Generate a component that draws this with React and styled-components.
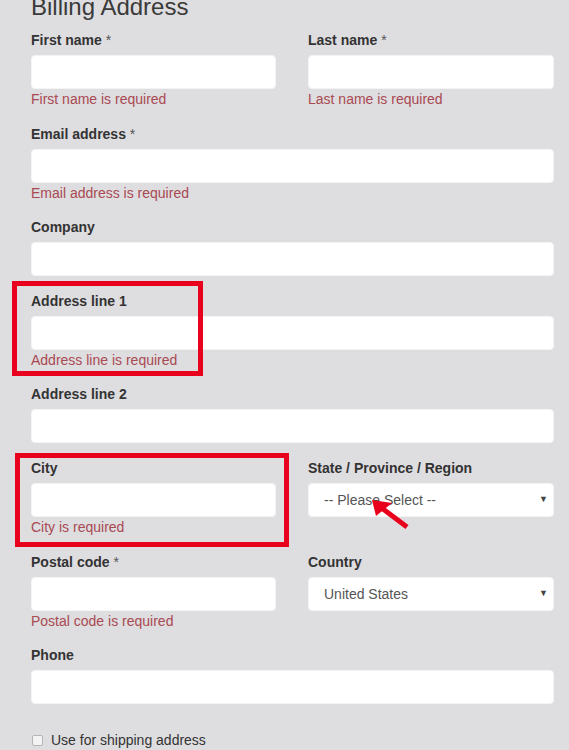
import React from 'react';
import styled, { createGlobalStyle } from 'styled-components';

const GlobalStyle = createGlobalStyle`
  html, body {
    margin: 0;
    padding: 0;
    background: #dedde0;
    overflow: hidden;
  }
  body {
    font-family: "Liberation Sans", Arial, Helvetica, sans-serif;
    font-size: 14px;
    color: #333;
  }
`;

const Page = styled.div`
  position: relative;
  width: 569px;
  height: 750px;
  overflow: hidden;
  box-sizing: border-box;
  padding: 0 15px 0 31px;
`;

const Title = styled.h3`
  margin: -6px 0 10px;
  font-size: 24px;
  font-weight: 400;
  line-height: 26px;
  color: #3a3a3a;
`;

const Row = styled.div`
  display: grid;
  grid-template-columns: 245px 246px;
  column-gap: 32px;
`;

const Group = styled.div`
  margin-bottom: 14.6px;
`;

const Label = styled.label`
  display: block;
  font-weight: 700;
  line-height: 20px;
  margin-bottom: 5px;
  color: #333;
`;

const Star = styled.span`
  font-weight: 400;
  color: #555;
`;

const Input = styled.input`
  display: block;
  box-sizing: border-box;
  width: 100%;
  height: 34px;
  margin: 0;
  padding: 6px 12px;
  border: 1px solid #f4f4f4;
  border-radius: 4px;
  background: #fff;
  font: inherit;
  outline: none;
`;

const SelectBox = styled.div`
  position: relative;
  height: 34px;
`;

const Select = styled.select`
  display: block;
  box-sizing: border-box;
  width: 100%;
  height: 34px;
  margin: 0;
  padding: 0 28px 0 15px;
  border: 1px solid #f4f4f4;
  border-radius: 4px;
  background: #fff;
  color: #555;
  font: inherit;
  appearance: none;
  outline: none;
`;

const Caret = styled.span`
  position: absolute;
  right: 6px;
  top: 11px;
  font-size: 9px;
  line-height: 10px;
  color: #444;
  pointer-events: none;
`;

const Error = styled.div`
  line-height: 20px;
  color: #a94a52;
`;

const CheckRow = styled.label`
  display: flex;
  align-items: center;
  gap: 8px;
  margin-top: 26px;
  line-height: 20px;
  color: #333;
  padding-left: 1px;
`;

const Box = styled.span`
  display: inline-block;
  width: 9px;
  height: 9px;
  border: 1px solid #b5b5b5;
  border-radius: 2px;
  background: #f3f3f3;
`;

const Highlight = styled.div`
  position: absolute;
  box-sizing: border-box;
  border: 5px solid #e8001c;
  left: ${p => p.x}px;
  top: ${p => p.y}px;
  width: ${p => p.w}px;
  height: ${p => p.h}px;
  pointer-events: none;
`;

const Arrow = styled.svg`
  position: absolute;
  left: 0;
  top: 0;
  pointer-events: none;
`;

const Field = ({ label, required, error, select, value }) => (
  <Group>
    <Label>
      {label}
      {required && <Star> *</Star>}
    </Label>
    {select ? (
      <SelectBox>
        <Select defaultValue={value}>
          <option>{value}</option>
        </Select>
        <Caret>▼</Caret>
      </SelectBox>
    ) : (
      <Input type="text" />
    )}
    {error && <Error>{error}</Error>}
  </Group>
);

export default function App() {
  return (
    <>
      <GlobalStyle />
      <Page>
        <Title>Billing Address</Title>
        <Row>
          <Field label="First name" required error="First name is required" />
          <Field label="Last name" required error="Last name is required" />
        </Row>
        <Field label="Email address" required error="Email address is required" />
        <Field label="Company" />
        <Field label="Address line 1" error="Address line is required" />
        <Field label="Address line 2" />
        <Row>
          <Field label="City" error="City is required" />
          <Field label="State / Province / Region" select value="-- Please Select --" />
        </Row>
        <Row>
          <Field label="Postal code" required error="Postal code is required" />
          <Field label="Country" select value="United States" />
        </Row>
        <Field label="Phone" />
        <CheckRow>
          <Box />
          Use for shipping address
        </CheckRow>

        <Highlight x={12} y={281} w={191} h={95} />
        <Highlight x={15} y={453} w={274} h={94} />
        <Arrow width="569" height="750" viewBox="0 0 569 750">
          <line x1="407" y1="527" x2="383" y2="509" stroke="#e8001c" strokeWidth="5" />
          <polygon points="372,500 392,503 376,516" fill="#e8001c" />
        </Arrow>
      </Page>
    </>
  );
}
